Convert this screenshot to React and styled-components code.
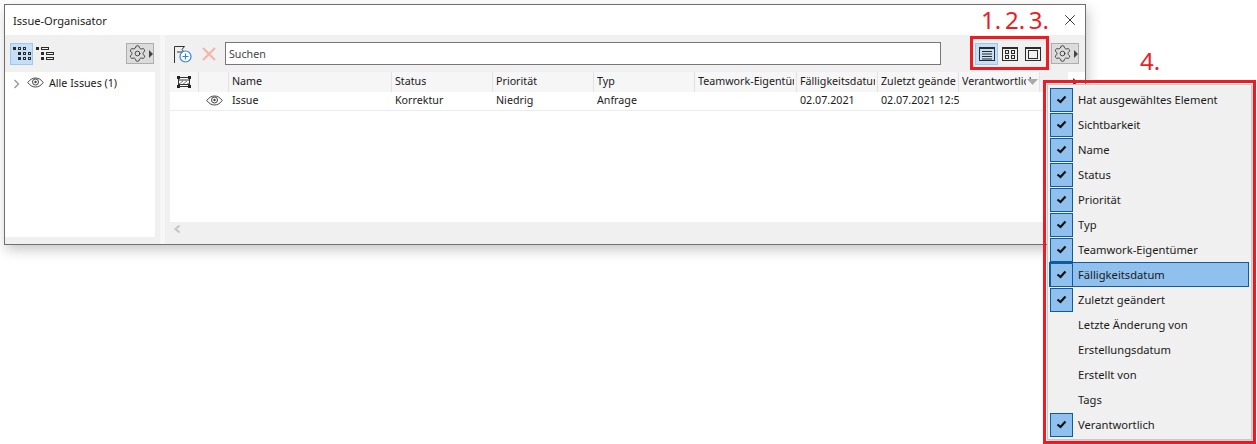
import React from "react";
import styled, { createGlobalStyle } from "styled-components";
import { Settings, X } from "lucide-react";

const COLUMNS = [
  { label: "Name", value: "Issue", width: 163 },
  { label: "Status", value: "Korrektur", width: 101 },
  { label: "Priorität", value: "Niedrig", width: 101 },
  { label: "Typ", value: "Anfrage", width: 101 },
  { label: "Teamwork-Eigentümer", value: "", width: 102 },
  { label: "Fälligkeitsdatum", value: "02.07.2021", width: 81 },
  { label: "Zuletzt geändert", value: "02.07.2021 12:54", width: 81 },
  { label: "Verantwortlich", value: "", width: 81, sorted: true },
];

const MENU_ITEMS = [
  { label: "Hat ausgewähltes Element", checked: true },
  { label: "Sichtbarkeit", checked: true },
  { label: "Name", checked: true },
  { label: "Status", checked: true },
  { label: "Priorität", checked: true },
  { label: "Typ", checked: true },
  { label: "Teamwork-Eigentümer", checked: true },
  { label: "Fälligkeitsdatum", checked: true, active: true },
  { label: "Zuletzt geändert", checked: true },
  { label: "Letzte Änderung von" },
  { label: "Erstellungsdatum" },
  { label: "Erstellt von" },
  { label: "Tags" },
  { label: "Verantwortlich", checked: true },
];

export default function App() {
  return (
    <Page>
      <GlobalStyle />
      <Window>
        <TitleBar>
          <Title>Issue-Organisator</Title>
          <CloseIcon size={18} strokeWidth={1.1} />
        </TitleBar>
        <Body>
          <Sidebar>
            <Toolbar>
              <IconButton $active><GridDotsIcon /></IconButton>
              <IconButton><TreeIcon /></IconButton>
              <Spacer />
              <GearButton />
            </Toolbar>
            <TreePanel>
              <TreeRow>
                <Chevron width="8" height="10" viewBox="0 0 8 10">
                  <path d="M1.5 1l4 4-4 4" fill="none" stroke="#999" strokeWidth="1.4" />
                </Chevron>
                <EyeIcon />
                <TreeLabel>Alle Issues (1)</TreeLabel>
              </TreeRow>
            </TreePanel>
          </Sidebar>
          <Splitter />
          <Main>
            <MainToolbar>
              <NewIssueIcon />
              <DeleteIcon />
              <SearchBox>Suchen</SearchBox>
              <ViewButtons>
                <IconButton $active><ListViewIcon /></IconButton>
                <IconButton><SplitViewIcon /></IconButton>
                <IconButton><SingleViewIcon /></IconButton>
              </ViewButtons>
              <GearButton />
            </MainToolbar>
            <TableArea>
              <HeaderRow>
                <IconHeader $width={29}><ZoneIcon /></IconHeader>
                <IconHeader $width={30} />
                {COLUMNS.map((col) => (
                  <HeaderCell key={col.label} $width={col.width}>
                    <CellText>{col.label}</CellText>
                    {col.sorted && <SortArrow />}
                  </HeaderCell>
                ))}
                <HeaderFiller />
                <ScrollArrowCell>
                  <svg width="5" height="8" viewBox="0 0 5 8">
                    <path d="M0 0l5 4-5 4z" fill="#444" />
                  </svg>
                </ScrollArrowCell>
              </HeaderRow>
              <DataRow>
                <IconCell $width={29} />
                <IconCell $width={30}><EyeIcon /></IconCell>
                {COLUMNS.map((col) => (
                  <DataCell key={col.label} $width={col.width}>{col.value}</DataCell>
                ))}
              </DataRow>
            </TableArea>
            <ScrollBar>
              <svg width="7" height="8" viewBox="0 0 7 8">
                <path d="M5.5 .5L1.5 4l4 3.5" fill="none" stroke="#c4c4c4" strokeWidth="2" />
              </svg>
            </ScrollBar>
          </Main>
        </Body>
      </Window>

      <Numbers>1. 2. 3.</Numbers>
      <ViewsMarker />
      <MenuNumber>4.</MenuNumber>
      <MenuMarker>
        <Menu>
          {MENU_ITEMS.map((item) => (
            <MenuItem key={item.label} $active={item.active}>
              <CheckSlot $checked={item.checked}>
                {item.checked && (
                  <svg width="11" height="9" viewBox="0 0 11 9">
                    <path d="M1.5 4.5l3 2.5 5-5.5" fill="none" stroke="#111" strokeWidth="2.2" />
                  </svg>
                )}
              </CheckSlot>
              <MenuLabel>{item.label}</MenuLabel>
            </MenuItem>
          ))}
        </Menu>
      </MenuMarker>
    </Page>
  );
}

function GearButton() {
  return (
    <GearBox>
      <Settings size={19} strokeWidth={1} color="#222" />
      <svg width="4" height="8" viewBox="0 0 4 8">
        <path d="M0 0l4 4-4 4z" fill="#444" />
      </svg>
    </GearBox>
  );
}

function EyeIcon() {
  return (
    <svg width="17" height="11" viewBox="0 0 17 11">
      <path d="M.8 5.5C3 2.4 5.6 1 8.5 1s5.500 1.400 7.700 4.500C14 8.600 11.400 10 8.500 10S3 8.600.8 5.500z" fill="none" stroke="#444" strokeWidth="1" />
      <circle cx="8.500" cy="5" r="3" fill="none" stroke="#444" strokeWidth="1" />
      <circle cx="8.500" cy="5" r="1.200" fill="#444" />
    </svg>
  );
}

function GridDotsIcon() {
  const filled = [[0, 0], [5, 5], [5, 10]];
  const hollow = [[5, 0], [10, 0], [10, 5], [15, 5], [10, 10], [15, 10]];
  return (
    <svg width="18" height="13" viewBox="0 0 18 13">
      {filled.map(([x, y]) => (
        <rect key={`${x}-${y}`} x={x} y={y} width="3" height="3" fill="#2b2b2b" />
      ))}
      {hollow.map(([x, y]) => (
        <rect key={`${x}-${y}`} x={x + 0.5} y={y + 0.5} width="2" height="2" fill="none" stroke="#2b2b2b" />
      ))}
    </svg>
  );
}

function TreeIcon() {
  return (
    <svg width="18" height="13" viewBox="0 0 18 13">
      <g fill="#2b2b2b">
        <rect x="0" y="0" width="3" height="3" />
        <rect x="5" y="5" width="3" height="3" />
        <rect x="5" y="10" width="3" height="3" />
      </g>
      <g fill="none" stroke="#2b2b2b">
        <rect x="5.500" y=".5" width="7" height="2" />
        <rect x="10.500" y="5.500" width="7" height="2" />
        <rect x="10.500" y="10.500" width="7" height="2" />
      </g>
    </svg>
  );
}

function NewIssueIcon() {
  return (
    <ToolIcon width="20" height="20" viewBox="0 0 20 20">
      <path d="M1.500 19V2.500h10L9 5.500l2 2.500H4" fill="none" stroke="#333" strokeWidth="1" />
      <circle cx="12.500" cy="12.500" r="5.500" fill="#fff" stroke="#2f86d6" strokeWidth="1.200" />
      <path d="M12.500 9.500v6M9.500 12.500h6" stroke="#2f86d6" strokeWidth="1.200" />
    </ToolIcon>
  );
}

function DeleteIcon() {
  return (
    <ToolIcon width="16" height="16" viewBox="0 0 16 16">
      <path d="M2 2l12 12M14 2L2 14" stroke="#f5b5a8" strokeWidth="2" />
    </ToolIcon>
  );
}

function ListViewIcon() {
  return (
    <svg width="16" height="14" viewBox="0 0 16 14">
      <rect x=".5" y=".5" width="15" height="13" fill="none" stroke="#2b2b2b" />
      <rect x="0" y="0" width="16" height="2" fill="#2b2b2b" />
      <path d="M3 4.500h10M3 7h10M3 9.500h10M3 12h10" stroke="#2b2b2b" />
    </svg>
  );
}

function SplitViewIcon() {
  return (
    <svg width="16" height="14" viewBox="0 0 16 14">
      <rect x=".5" y=".5" width="15" height="13" fill="none" stroke="#2b2b2b" />
      <rect x="0" y="0" width="16" height="2" fill="#2b2b2b" />
      <g fill="none" stroke="#2b2b2b">
        <rect x="3.500" y="3.500" width="3" height="3" />
        <rect x="9.500" y="3.500" width="3" height="3" />
        <rect x="3.500" y="8.500" width="3" height="3" />
        <rect x="9.500" y="8.500" width="3" height="3" />
      </g>
    </svg>
  );
}

function SingleViewIcon() {
  return (
    <svg width="16" height="14" viewBox="0 0 16 14">
      <rect x=".5" y=".5" width="15" height="13" fill="none" stroke="#2b2b2b" />
      <rect x="0" y="0" width="16" height="2" fill="#2b2b2b" />
      <rect x="3.500" y="3.500" width="9" height="8" fill="none" stroke="#2b2b2b" />
    </svg>
  );
}

function ZoneIcon() {
  return (
    <svg width="14" height="12" viewBox="0 0 14 12">
      <rect x="1.500" y="1.500" width="11" height="9" fill="#fff" stroke="#333" />
      <path d="M2 8l4-3M5 9l5-4M9 9l3-2" stroke="#777" />
      <rect x="2" y="3.500" width="10" height="1" fill="#333" />
      <rect x="2" y="8" width="10" height="1" fill="#333" />
      <g fill="#222">
        <rect x="0" y="0" width="3" height="3" />
        <rect x="11" y="0" width="3" height="3" />
        <rect x="0" y="9" width="3" height="3" />
        <rect x="11" y="9" width="3" height="3" />
      </g>
    </svg>
  );
}

function SortArrow() {
  return (
    <SortArrowIcon width="12" height="6" viewBox="0 0 12 6">
      <path d="M1 0h11L6.500 6z" fill="#aaa" />
    </SortArrowIcon>
  );
}

const GlobalStyle = createGlobalStyle`
  html, body {
    margin: 0;
    background: #fff;
  }
  body {
    font-family: "Noto Sans", "Open Sans", sans-serif;
    font-size: 10.7px;
    color: #1a1a1a;
  }
`;

const Page = styled.div`
  position: relative;
  width: 1257px;
  height: 444px;
  padding: 4px;
  box-sizing: border-box;
  overflow: hidden;
`;

const Window = styled.div`
  width: 1082px;
  height: 241px;
  box-sizing: border-box;
  display: flex;
  flex-direction: column;
  background: #f0f0f0;
  border: 1px solid #6f6f6f;
  box-shadow: 2px 5px 12px rgba(0, 0, 0, 0.22);
`;

const TitleBar = styled.div`
  height: 30px;
  flex: none;
  display: flex;
  align-items: center;
  justify-content: space-between;
  padding: 0 6px 0 8px;
  background: #fff;
`;

const Title = styled.span`
  font-size: 11.1px;
  color: #222;
`;

const CloseIcon = styled(X)`
  color: #111;
`;

const Body = styled.div`
  flex: 1;
  min-height: 0;
  display: flex;
`;

const Sidebar = styled.div`
  width: 150px;
  flex: none;
  display: flex;
  flex-direction: column;
  padding-bottom: 7px;
  box-sizing: border-box;
`;

const Toolbar = styled.div`
  height: 37px;
  flex: none;
  display: flex;
  align-items: center;
  padding: 0 1px 0 5px;
`;

const Spacer = styled.div`
  flex: 1;
`;

const IconButton = styled.div`
  width: 23px;
  height: 22px;
  box-sizing: border-box;
  display: flex;
  align-items: center;
  justify-content: center;
  background: ${(p) => (p.$active ? "#c5e0f6" : "transparent")};
  border: 1px solid ${(p) => (p.$active ? "#99c9ef" : "transparent")};
`;

const GearBox = styled.div`
  width: 28px;
  height: 21px;
  box-sizing: border-box;
  display: flex;
  align-items: center;
  justify-content: center;
  gap: 2px;
  background: #dcdcdc;
  border: 1px solid #adadad;
`;

const TreePanel = styled.div`
  flex: 1;
  background: #fff;
`;

const TreeRow = styled.div`
  display: flex;
  align-items: center;
  height: 21px;
  padding-left: 8px;
`;

const Chevron = styled.svg`
  margin-right: 6px;
  margin-top: 2px;
`;

const TreeLabel = styled.span`
  margin-left: 5px;
`;

const Splitter = styled.div`
  width: 10px;
  flex: none;
  background: linear-gradient(to right, #f0f0f0 50%, #f6f6f6 50%);
`;

const Main = styled.div`
  flex: 1;
  min-width: 0;
  display: flex;
  flex-direction: column;
`;

const MainToolbar = styled.div`
  height: 37px;
  flex: none;
  display: flex;
  align-items: center;
  padding: 0 5px 0 8px;
`;

const ToolIcon = styled.svg`
  flex: none;
  margin-right: 8px;
`;

const SearchBox = styled.div`
  width: 716px;
  height: 23px;
  flex: none;
  box-sizing: border-box;
  display: flex;
  align-items: center;
  padding-left: 3px;
  background: #fff;
  border: 1px solid #777;
  color: #444;
`;

const ViewButtons = styled.div`
  display: flex;
  align-items: center;
  margin-left: 34px;
  margin-right: 7px;
`;

const TableArea = styled.div`
  flex: 1;
  margin-left: 5px;
  background: #fff;
  overflow: hidden;
`;

const HeaderRow = styled.div`
  display: flex;
  height: 20px;
`;

const IconHeader = styled.div`
  width: ${(p) => p.$width}px;
  flex: none;
  box-sizing: border-box;
  display: flex;
  align-items: center;
  justify-content: center;
  background: #f6f6f6;
  border-right: 1px solid #e2e2e2;
`;

const HeaderCell = styled.div`
  position: relative;
  width: ${(p) => p.$width}px;
  flex: none;
  box-sizing: border-box;
  display: flex;
  align-items: center;
  padding: 0 2px 2px 3px;
  background: #f6f6f6;
  border-right: 1px solid #e2e2e2;
  overflow: hidden;
`;

const CellText = styled.span`
  white-space: nowrap;
  overflow: hidden;
`;

const SortArrowIcon = styled.svg`
  position: absolute;
  right: 1px;
  top: 7px;
  background: #f6f6f6;
`;

const HeaderFiller = styled.div`
  width: 28px;
  flex: none;
  background: #f0f0f0;
`;

const ScrollArrowCell = styled.div`
  flex: 1;
  display: flex;
  align-items: center;
  justify-content: flex-end;
  padding-right: 7px;
`;

const DataRow = styled.div`
  display: flex;
  height: 18px;
  border-bottom: 1px solid #ececec;
`;

const IconCell = styled.div`
  width: ${(p) => p.$width}px;
  flex: none;
  display: flex;
  align-items: center;
  justify-content: center;
  padding-bottom: 2px;
`;

const DataCell = styled.div`
  width: ${(p) => p.$width}px;
  flex: none;
  box-sizing: border-box;
  padding: 0 2px 0 3px;
  line-height: 16px;
  white-space: nowrap;
  overflow: hidden;
`;

const ScrollBar = styled.div`
  height: 22px;
  flex: none;
  display: flex;
  align-items: center;
  padding: 0 0 8px 9px;
  box-sizing: border-box;
`;

const Numbers = styled.div`
  position: absolute;
  left: 981px;
  top: 4px;
  font-size: 24px;
  line-height: 32px;
  color: #ed1c24;
  word-spacing: -2.5px;
`;

const MenuNumber = styled(Numbers)`
  left: 1140px;
  top: 45px;
`;

const ViewsMarker = styled.div`
  position: absolute;
  left: 970px;
  top: 36px;
  width: 79px;
  height: 34px;
  box-sizing: border-box;
  border: 3px solid #ed1c24;
`;

const MenuMarker = styled.div`
  position: absolute;
  left: 1043px;
  top: 80px;
  width: 213px;
  height: 364px;
  box-sizing: border-box;
  padding: 1px;
  border: 3px solid #ed1c24;
`;

const Menu = styled.div`
  height: 100%;
  box-sizing: border-box;
  padding: 3px 3px 0 2px;
  background: #f0f0f0;
  border: 1px solid #c8c8c8;
  box-shadow: 1px 1px 2px rgba(0, 0, 0, 0.25);
`;

const MenuItem = styled.div`
  height: 23px;
  margin-bottom: 2px;
  display: flex;
  align-items: center;
  box-sizing: border-box;
  background: ${(p) => (p.$active ? "#90c1ee" : "transparent")};
  outline: ${(p) => (p.$active ? "1px solid #0f5c9c" : "none")};
`;

const CheckSlot = styled.div`
  width: 23px;
  height: 24px;
  flex: none;
  box-sizing: border-box;
  display: flex;
  align-items: center;
  justify-content: center;
  background: ${(p) => (p.$checked ? "#90c1ee" : "transparent")};
  border: 1px solid ${(p) => (p.$checked ? "#0f5c9c" : "transparent")};
`;

const MenuLabel = styled.span`
  margin-left: 5px;
  font-size: 11.2px;
  color: #1a1a1a;
`;
